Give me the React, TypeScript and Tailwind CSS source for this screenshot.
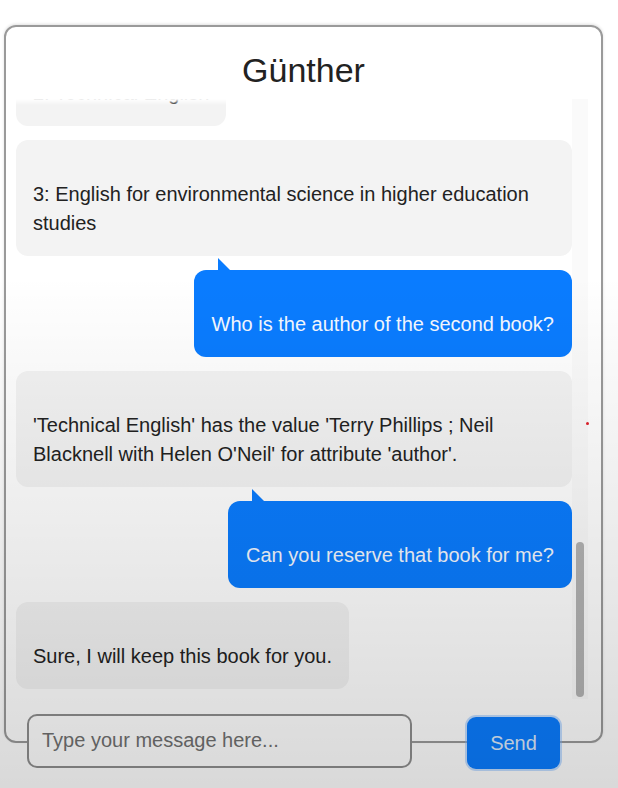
import { useState } from 'react';

type Msg = { from: 'bot' | 'user'; text: string };

const messages: Msg[] = [
  { from: 'bot', text: '1: Business English\n2: Technical English' },
  { from: 'bot', text: '3: English for environmental science in higher education studies' },
  { from: 'user', text: 'Who is the author of the second book?' },
  { from: 'bot', text: "'Technical English' has the value 'Terry Phillips ; Neil Blacknell with Helen O'Neil' for attribute 'author'." },
  { from: 'user', text: 'Can you reserve that book for me?' },
  { from: 'bot', text: 'Sure, I will keep this book for you.' },
];

function Bubble({ msg }: { msg: Msg }) {
  if (msg.from === 'user') {
    return (
      <div className="flex justify-end">
        <div className="relative rounded-[12px] bg-[#0a7cff] px-[18px] pt-[40px] pb-[18px] text-[20px] leading-[29px] text-[#f4f8ff]">
          <span className="absolute -top-[12px] left-[24px] h-0 w-0 border-b-[12px] border-r-[12px] border-b-[#0a7cff] border-r-transparent" />
          {msg.text}
        </div>
      </div>
    );
  }
  return (
    <div className="flex justify-start">
      <div className="whitespace-pre-line rounded-[12px] bg-[#f3f3f3] px-[17px] pt-[40px] pb-[18px] text-[20px] leading-[29px] text-[#222]">
        {msg.text}
      </div>
    </div>
  );
}

export default function App() {
  const [draft, setDraft] = useState('');

  return (
    <div className="relative h-[788px] w-[618px] overflow-hidden bg-white font-['Liberation_Sans',Arial,sans-serif]">
      <div className="pt-[25px] pl-[4px] pr-[15px]">
        <div className="relative flex h-[718px] flex-col rounded-[12px] border-2 border-[#9a9a9a] shadow-[0_-1px_3px_rgba(0,0,0,0.12)]">
          {/* header */}
          <h1 className="pt-[23px] pb-[9px] text-center text-[34px] leading-[40px] font-medium text-[#222]">Günther</h1>

          {/* messages + fake scrollbar */}
          <div className="flex h-[600px] pl-[10px] pr-[13px]">
            <div className="relative flex flex-1 flex-col justify-end gap-[14px] overflow-hidden pb-[10px]">
              {messages.map((m, i) => (
                <Bubble key={i} msg={m} />
              ))}
              <div className="pointer-events-none absolute inset-x-0 top-0 h-[6px] bg-gradient-to-b from-white to-transparent" />
            </div>
            <div className="flex w-[16px] flex-col justify-end bg-[#fafafa] pb-[2px]">
              <div className="mx-auto h-[155px] w-[8px] rounded-full bg-[#b3b3b3]" />
            </div>
          </div>

          {/* input row, sits on the bottom border */}
          <div className="-mb-[28px] mt-[13px] flex items-center pl-[21px]">
            <input
              value={draft}
              onChange={(e) => setDraft(e.target.value)}
              placeholder="Type your message here..."
              className="h-[54px] w-[385px] rounded-[10px] border-2 border-[#8e8e8e] bg-white px-[13px] text-[20px] text-[#222] placeholder:text-[#707070] outline-none"
            />
            <button className="ml-[55px] mt-[5px] h-[52px] w-[93px] rounded-[9px] bg-[#0a7cff] text-[20px] font-medium text-[#dce9fb] shadow-[0_0_0_2px_rgba(120,180,255,0.45)]">
              Send
            </button>
          </div>

          <span className="absolute left-[580px] top-[395px] h-[3px] w-[3px] rounded-full bg-[#e0202a]" />
        </div>
      </div>

      {/* light vignette of the capture */}
      <div className="pointer-events-none absolute inset-0 bg-gradient-to-b from-transparent from-[35%] to-black/[0.15]" />
    </div>
  );
}
